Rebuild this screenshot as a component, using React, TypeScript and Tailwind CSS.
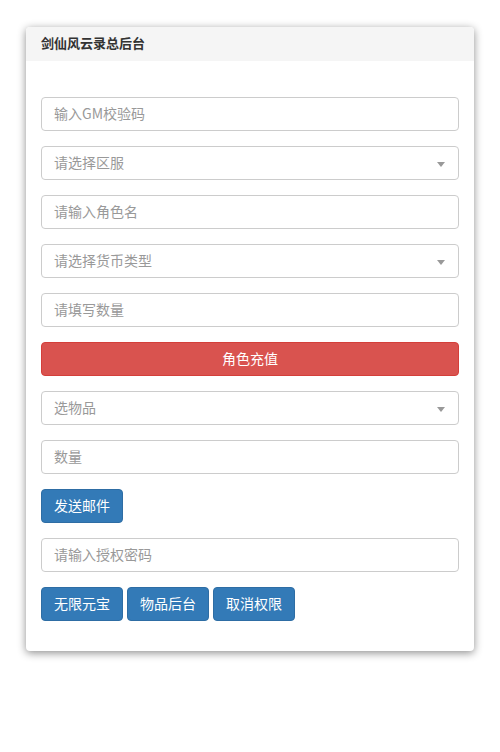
/**
 * Game admin backend panel: GM code, server/currency selects, recharge,
 * item mail and authorization actions.
 */

const font = { fontFamily: '"Noto Sans CJK SC", "Noto Sans", sans-serif' };

function TextField({ placeholder }: { placeholder: string }) {
  return (
    <input
      type="text"
      placeholder={placeholder}
      className="block w-full h-[34px] px-3 pb-[2px] text-[14px] text-[#555] bg-white border border-[#ccc] rounded-[4px] placeholder:text-[#999] outline-none"
    />
  );
}

function SelectField({ placeholder }: { placeholder: string }) {
  return (
    <div className="relative flex items-center w-full h-[34px] px-3 pb-[2px] text-[14px] text-[#999] bg-white border border-[#ccc] rounded-[4px]">
      <span>{placeholder}</span>
      <span className="absolute right-[13px] top-[15px] w-0 h-0 border-l-[4px] border-r-[4px] border-t-[5px] border-l-transparent border-r-transparent border-t-[#999]" />
    </div>
  );
}

function BlueButton({ label }: { label: string }) {
  return (
    <button className="h-[34px] w-[82px] pb-[2px] text-[14px] text-white bg-[#337ab7] border border-[#2e6da4] rounded-[4px]">
      {label}
    </button>
  );
}

export default function App() {
  return (
    <div className="bg-white min-h-[752px] pt-[27px]" style={font}>
      <div className="mx-[26px] bg-white rounded-[4px] shadow-[0_2px_8px_rgba(0,0,0,0.45)] overflow-hidden">
        <div className="h-[34px] flex items-center px-[15px] pb-[2px] bg-[#f5f5f5] text-[13px] font-bold text-[#333]">
          剑仙风云录总后台
        </div>
        <div className="flex flex-col gap-[15px] px-[15px] pt-[36px] pb-[30px]">
          <TextField placeholder="输入GM校验码" />
          <SelectField placeholder="请选择区服" />
          <TextField placeholder="请输入角色名" />
          <SelectField placeholder="请选择货币类型" />
          <TextField placeholder="请填写数量" />
          <button className="w-full h-[34px] pb-[2px] text-[14px] text-white bg-[#d9534f] border border-[#d43f3a] rounded-[4px]">
            角色充值
          </button>
          <SelectField placeholder="选物品" />
          <TextField placeholder="数量" />
          <div className="flex">
            <BlueButton label="发送邮件" />
          </div>
          <TextField placeholder="请输入授权密码" />
          <div className="flex gap-[4px]">
            <BlueButton label="无限元宝" />
            <BlueButton label="物品后台" />
            <BlueButton label="取消权限" />
          </div>
        </div>
      </div>
    </div>
  );
}
